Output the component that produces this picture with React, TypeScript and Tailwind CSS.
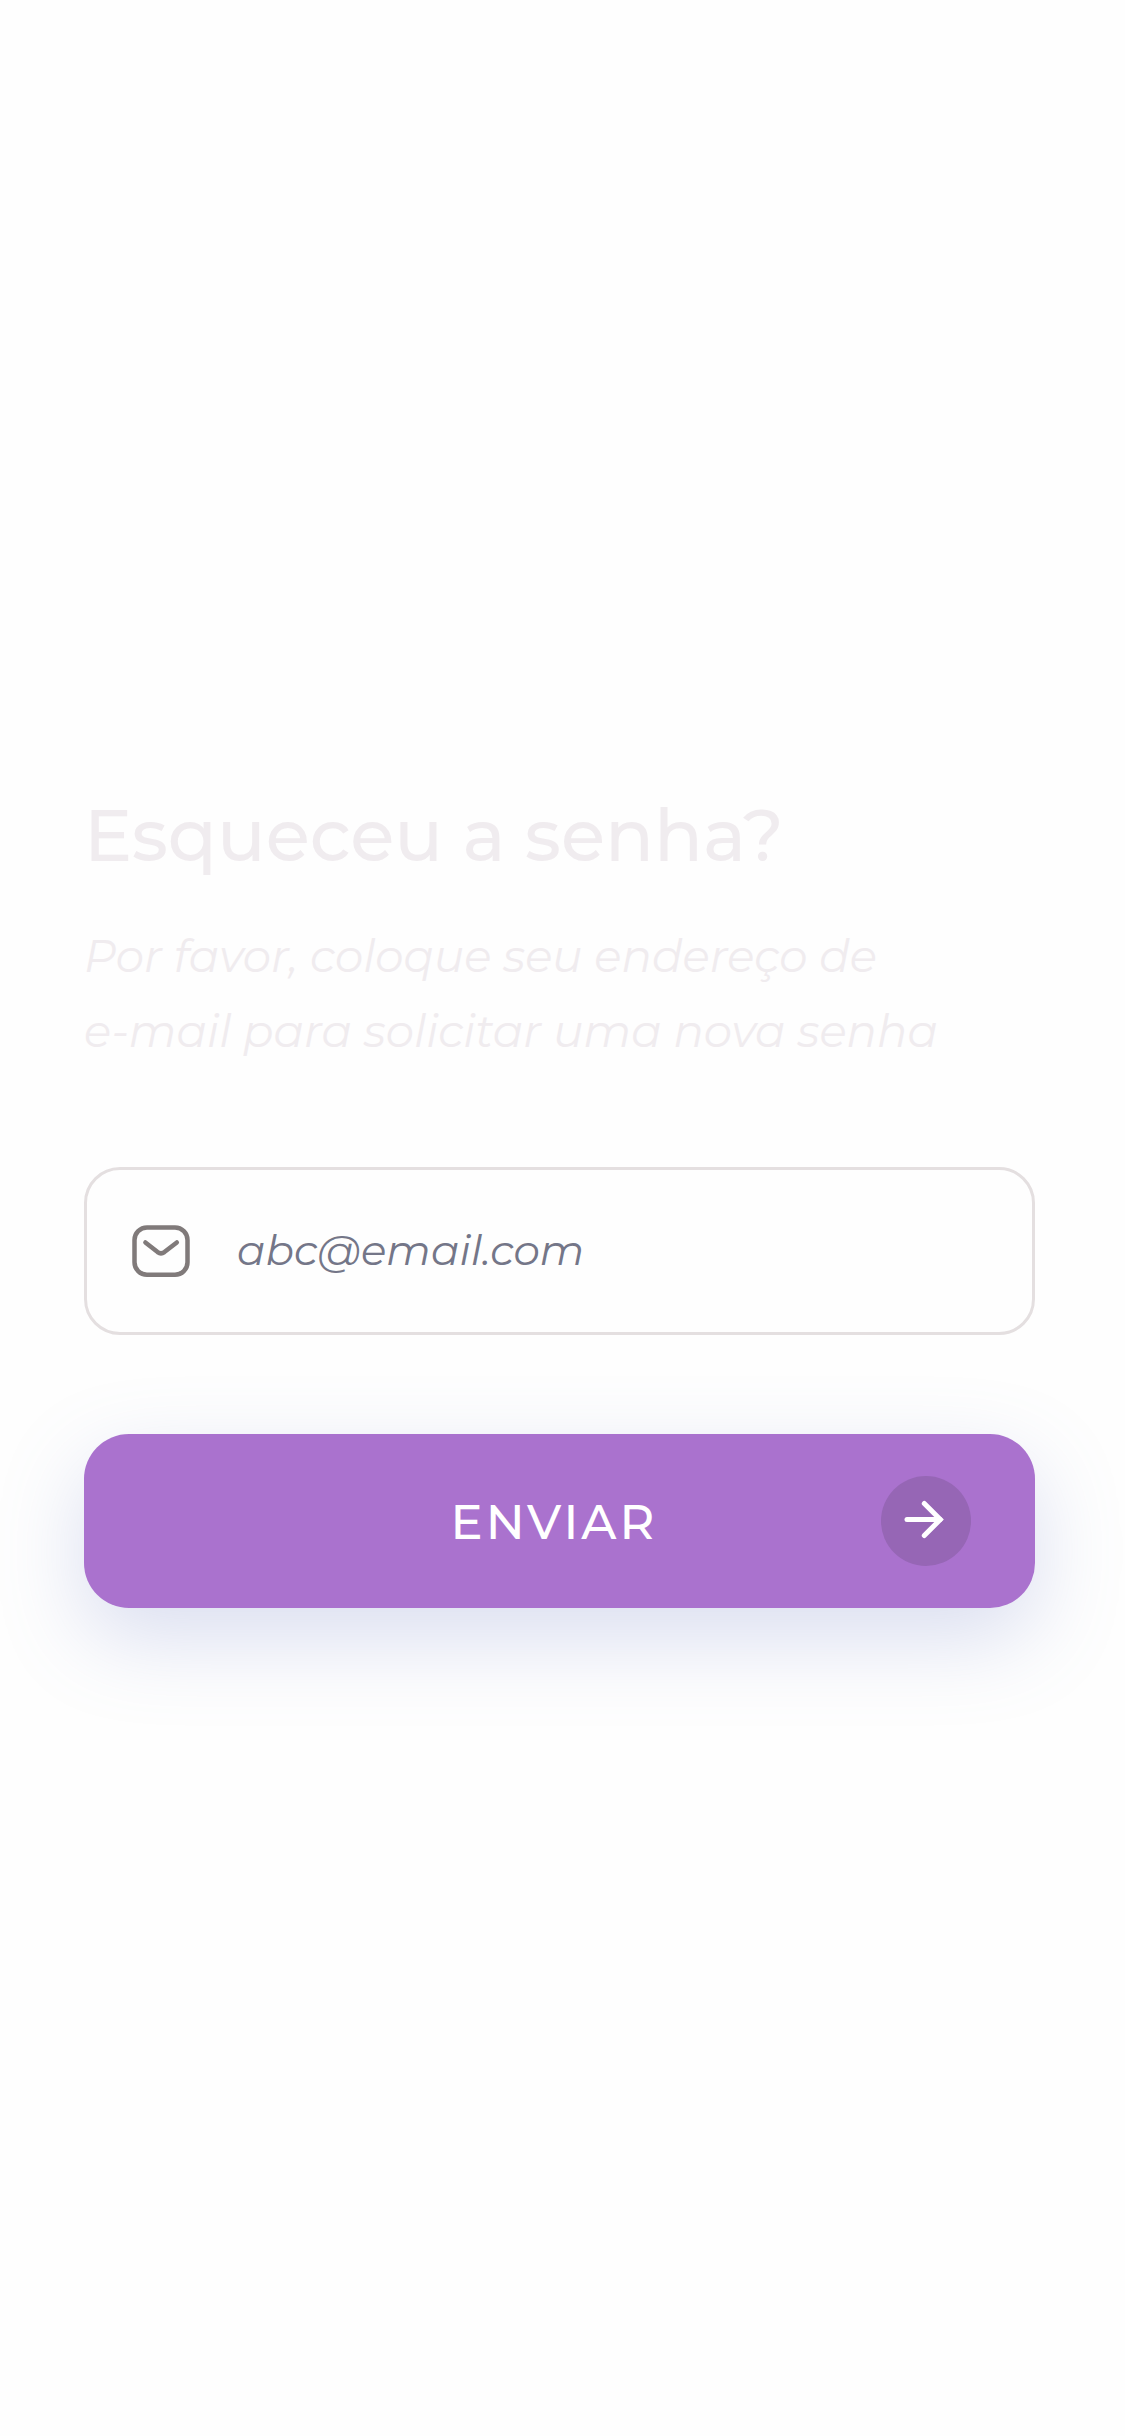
function MailIcon() {
  return (
    <svg className="h-[66px] w-[66px] shrink-0" viewBox="0 0 66 66" fill="none" stroke="#807a7a" strokeWidth="4.5" strokeLinecap="round" strokeLinejoin="round">
      <rect x="6.5" y="9.4" width="53" height="47.3" rx="12.5" />
      <path d="M17.4 24.4 29.6 34.1Q33 36.6 36.4 34.1L48.8 24.4" />
    </svg>
  );
}

function ArrowIcon() {
  return (
    <svg className="h-[66px] w-[66px]" viewBox="0 0 66 66" fill="none" stroke="#ffffff" strokeWidth="5" strokeLinecap="round">
      <path d="M14 31.5H47" />
      <path d="M31.3 15.5 47.3 31.5 31.3 47.5" strokeLinejoin="miter" />
    </svg>
  );
}

export default function App() {
  return (
    <main className="flex min-h-[2436px] w-[1125px] flex-col bg-[#fefefe] pr-[90px] pl-[84px] pt-[785px] font-[Montserrat,Inter,sans-serif]">
      <h1 className="h-[100px] whitespace-nowrap text-[72px] leading-[100px] font-medium text-[#f0ecef]">
        Esqueceu a senha?
      </h1>
      <p className="mt-[33px] whitespace-nowrap text-[45px] leading-[75px] font-normal italic text-[#f0ecef]">
        <span className="block">Por favor, coloque seu endereço de</span>
        <span className="block">e-mail para solicitar uma nova senha</span>
      </p>
      <label className="mt-[99px] flex h-[168px] items-center rounded-[36px] border-[3px] border-[#e4dfe0] pl-[41px]">
        <MailIcon />
        <span className="mb-[2px] ml-[43px] whitespace-nowrap text-[42px] leading-[60px] font-normal italic text-[#747688]">
          abc@email.com
        </span>
      </label>
      <button className="mt-[99px] grid h-[174px] grid-cols-[1fr_auto_1fr] items-center rounded-[45px] bg-[#aa72ce] text-white shadow-[0_30px_84px_rgba(111,126,201,0.25)]">
        <span />
        <span className="mt-[2px] mr-[11px] whitespace-nowrap text-[48px] leading-[60px] font-medium tracking-[3px]">ENVIAR</span>
        <span className="mr-[64.5px] flex h-[90px] w-[90px] items-center justify-center justify-self-end rounded-full bg-[#9666b5]">
          <ArrowIcon />
        </span>
      </button>
    </main>
  );
}
